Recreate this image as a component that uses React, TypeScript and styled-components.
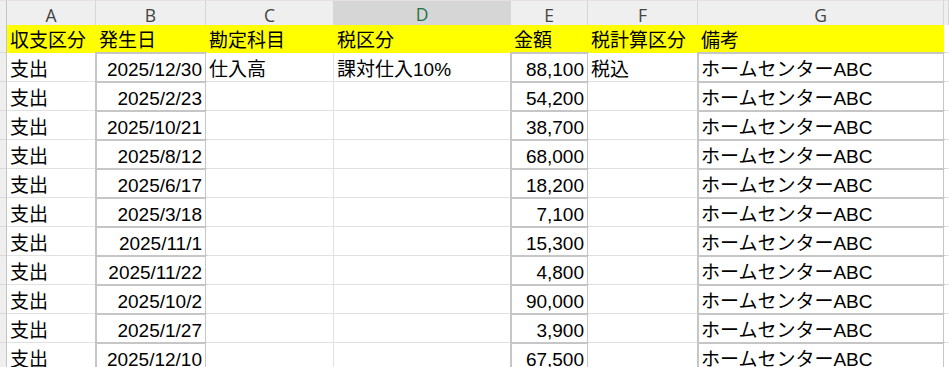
import React from 'react';
import styled, { createGlobalStyle } from 'styled-components';

const GlobalStyle = createGlobalStyle`
  html, body {
    margin: 0;
    padding: 0;
    background: #ffffff;
    overflow: hidden;
  }
`;

// row header, A..G, then the cut-off H column
const COLS = '7px 89px 110px 128px 177px 77px 110px 246px 1fr';

const letters = ['A', 'B', 'C', 'D', 'E', 'F', 'G', ''];

const titles = ['収支区分', '発生日', '勘定科目', '税区分', '金額', '税計算区分', '備考'];

const rows = [
  ['2025/12/30', '仕入高', '課対仕入10%', '88,100', '税込'],
  ['2025/2/23', '', '', '54,200', ''],
  ['2025/10/21', '', '', '38,700', ''],
  ['2025/8/12', '', '', '68,000', ''],
  ['2025/6/17', '', '', '18,200', ''],
  ['2025/3/18', '', '', '7,100', ''],
  ['2025/11/1', '', '', '15,300', ''],
  ['2025/11/22', '', '', '4,800', ''],
  ['2025/10/2', '', '', '90,000', ''],
  ['2025/1/27', '', '', '3,900', ''],
  ['2025/12/10', '', '', '67,500', ''],
];

const App = () => {
  return (
    <>
      <GlobalStyle />
      <Sheet>
        <Row $h={25}>
          <Corner />
          {letters.map((l, i) => (
            <ColHead key={i} $sel={l === 'D'}>{l}</ColHead>
          ))}
        </Row>

        <Row $h={28}>
          <RowHead />
          {titles.map((t) => (
            <Cell key={t} $fill>{t}</Cell>
          ))}
          <Cell />
        </Row>

        {rows.map((r, i) => (
          <Row $h={29} key={i}>
            <RowHead />
            <Cell>支出</Cell>
            <Cell $boxed $right>{r[0]}</Cell>
            <Cell>{r[1]}</Cell>
            <Cell>{r[2]}</Cell>
            <Cell $boxed $right>{r[3]}</Cell>
            <Cell>{r[4]}</Cell>
            <Cell $boxed>ホームセンターABC</Cell>
            <Cell />
          </Row>
        ))}
      </Sheet>
    </>
  );
};

export default App;

const Sheet = styled.div`
  width: 949px;
  height: 367px;
  overflow: hidden;
  font-family: "Liberation Sans", "Noto Sans CJK JP", sans-serif;
`;

const Row = styled.div<{ $h: number }>`
  display: grid;
  grid-template-columns: ${COLS};
  height: ${(p) => p.$h}px;
`;

const Corner = styled.div`
  box-sizing: border-box;
  background: #efefef;
  border-top: 1px solid #e9e1e1;
  border-right: 1px solid #c4c4c4;
  border-bottom: 1px solid #ababab;
`;

const ColHead = styled.div<{ $sel?: boolean }>`
  box-sizing: border-box;
  display: flex;
  align-items: center;
  justify-content: center;
  background: ${(p) => (p.$sel ? '#d6d6d6' : '#efefef')};
  border-top: 1px solid #e9e1e1;
  border-right: 1px solid #d6d6d6;
  border-bottom: ${(p) => (p.$sel ? '2px solid #217346' : '1px solid #ababab')};
  color: ${(p) => (p.$sel ? '#217346' : '#444444')};
  font-family: "Open Sans", "Liberation Sans", sans-serif;
  font-size: 17.5px;
  padding-top: 1px;
`;

const RowHead = styled.div`
  box-sizing: border-box;
  background: #efefef;
  border-right: 1px solid #c4c4c4;
  border-bottom: 1px solid #dadada;
`;

const Cell = styled.div<{ $fill?: boolean; $boxed?: boolean; $right?: boolean }>`
  box-sizing: border-box;
  display: flex;
  align-items: flex-end;
  justify-content: ${(p) => (p.$right ? 'flex-end' : 'flex-start')};
  padding: 0 3px 2px 3px;
  background: ${(p) => (p.$fill ? '#ffff00' : '#ffffff')};
  border-right: 1px solid ${(p) => (p.$fill ? '#ffff00' : '#e1e1e1')};
  border-bottom: 1px solid ${(p) => (p.$fill ? '#ffff00' : '#e1e1e1')};
  color: #000000;
  font-size: 19px;
  line-height: 19px;
  white-space: nowrap;
  ${(p) => p.$boxed && 'outline: 2px solid #c6c6c6; outline-offset: -1px;'}
`;
